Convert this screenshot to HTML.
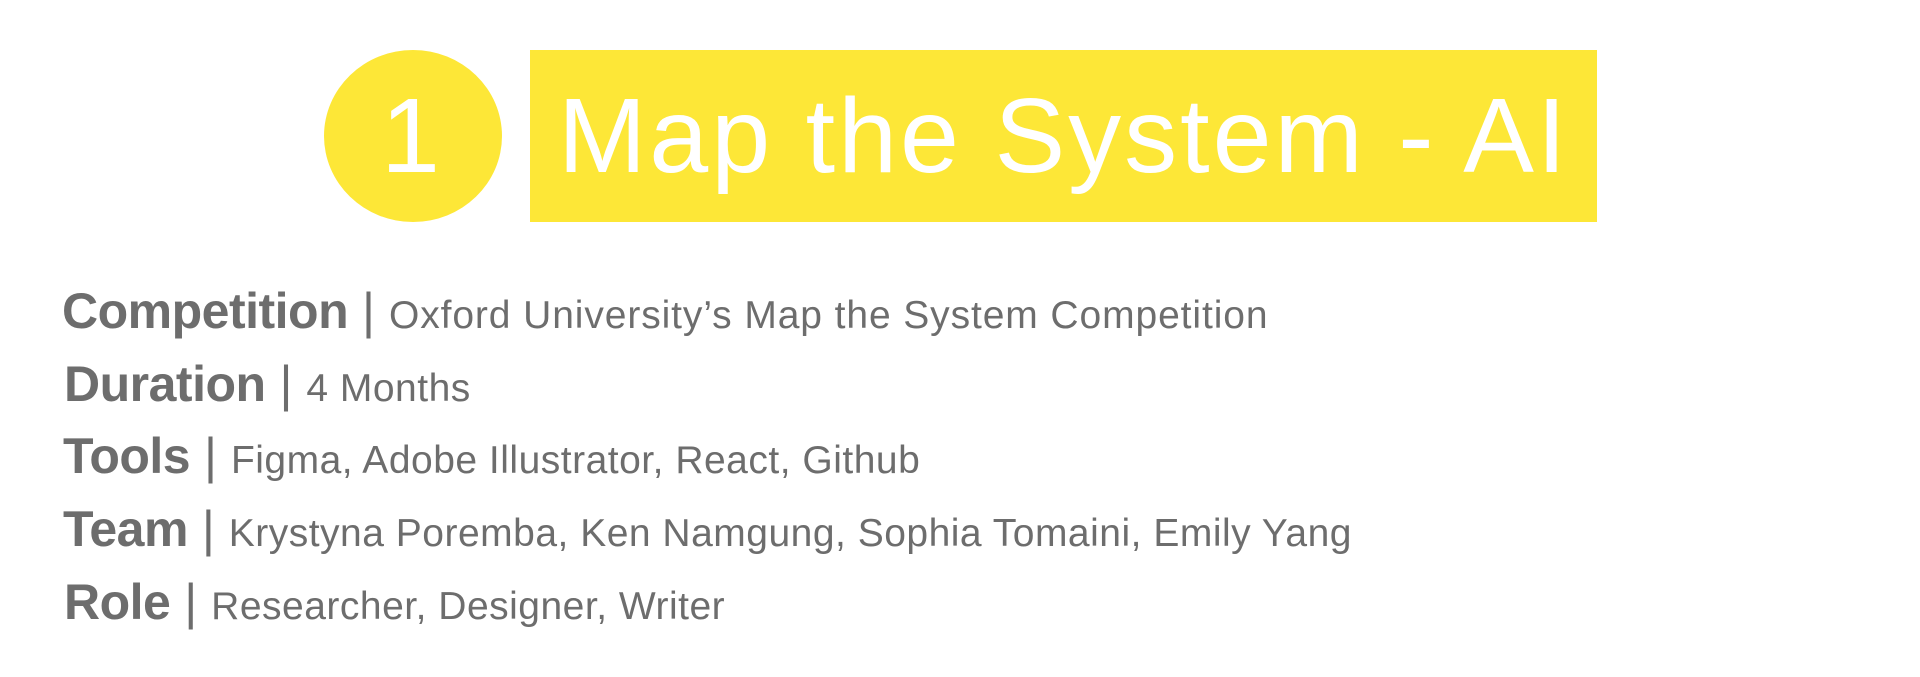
<!DOCTYPE html>
<html><head><meta charset="utf-8"><style>
html,body{margin:0;padding:0;background:#fff;}
body{width:1920px;height:677px;position:relative;overflow:hidden;font-family:"Liberation Sans",Arial,sans-serif;}
.circle{position:absolute;left:324px;top:50px;width:178px;height:172px;border-radius:50%;background:#fde737;}
.rect{position:absolute;left:530px;top:50px;width:1067px;height:172px;background:#fde737;}
.big{position:absolute;color:#fff;font-size:106px;line-height:1;top:83px;white-space:nowrap;}
.line{position:absolute;left:62px;font-size:50px;line-height:1;color:#6d6d6d;white-space:nowrap;}
.line b{font-weight:bold;letter-spacing:-0.5px;}
.line .bar{font-weight:normal;}
.line span.r{font-size:39px;letter-spacing:0.5px;}
</style></head><body>
<div class="circle"></div>
<div class="rect"></div>
<div class="big" style="left:381px">1</div>
<div class="big" style="left:558px;letter-spacing:3px">Map the System - AI</div>

<div class="line" style="top:286px"><b>Competition</b> <span class="bar">|</span> <span class="r" style="letter-spacing:0.9px">Oxford University’s Map the System Competition</span></div>
<div class="line" style="top:359px;left:64px"><b>Duration</b> <span class="bar">|</span> <span class="r">4 Months</span></div>
<div class="line" style="top:431px;left:63px"><b>Tools</b> <span class="bar">|</span> <span class="r">Figma, Adobe Illustrator, React, Github</span></div>
<div class="line" style="top:504px;left:63px"><b>Team</b> <span class="bar">|</span> <span class="r">Krystyna Poremba, Ken Namgung, Sophia Tomaini, Emily Yang</span></div>
<div class="line" style="top:577px;left:64px"><b>Role</b> <span class="bar">|</span> <span class="r">Researcher, Designer, Writer</span></div>
</body></html>
